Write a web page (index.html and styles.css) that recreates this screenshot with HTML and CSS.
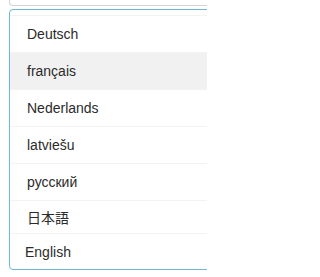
FILE: index.html
```html
<!DOCTYPE html>
<html>
<head>
<meta charset="utf-8">
<link rel="stylesheet" href="styles.css">
</head>
<body>
<div class="page">
  <div class="field"></div>
  <div class="menu">
    <div class="menu-top"></div>
    <div class="item">Deutsch</div>
    <div class="item active">français</div>
    <div class="item">Nederlands</div>
    <div class="item">latviešu</div>
    <div class="item">русский</div>
    <div class="item cjk">日本語</div>
    <div class="item last">English</div>
  </div>
</div>
</body>
</html>
```
FILE: styles.css
```css
html, body {
  margin: 0;
  padding: 0;
  background: #fff;
}
body {
  font-family: "Liberation Sans", Arial, "Noto Sans CJK JP", sans-serif;
  font-size: 14px;
  color: #2b2b2b;
}
.page {
  width: 207px;
  height: 277px;
  overflow: hidden;
}
.field {
  width: 240px;
  height: 6px;
  margin-left: 9px;
  border-left: 1px solid #d4d4d4;
  border-bottom: 1px solid #d4d4d4;
  border-bottom-left-radius: 4px;
  box-sizing: border-box;
}
.menu {
  width: 240px;
  margin-top: 3px;
  margin-left: 9px;
  border: 1px solid #6db9d3;
  border-radius: 4px;
  overflow: hidden;
}
.menu-top {
  height: 5px;
  border-bottom: 1px solid #f3f3f3;
}
.item {
  height: 36px;
  line-height: 36px;
  padding-left: 17px;
  border-bottom: 1px solid #f3f3f3;
  white-space: nowrap;
}
.item.active {
  background: #f1f1f1;
}
.item.cjk {
  height: 32px;
  line-height: 34px;
}
.item.last {
  height: 35px;
  line-height: 36px;
  padding-left: 15px;
  border-bottom: none;
}
```
